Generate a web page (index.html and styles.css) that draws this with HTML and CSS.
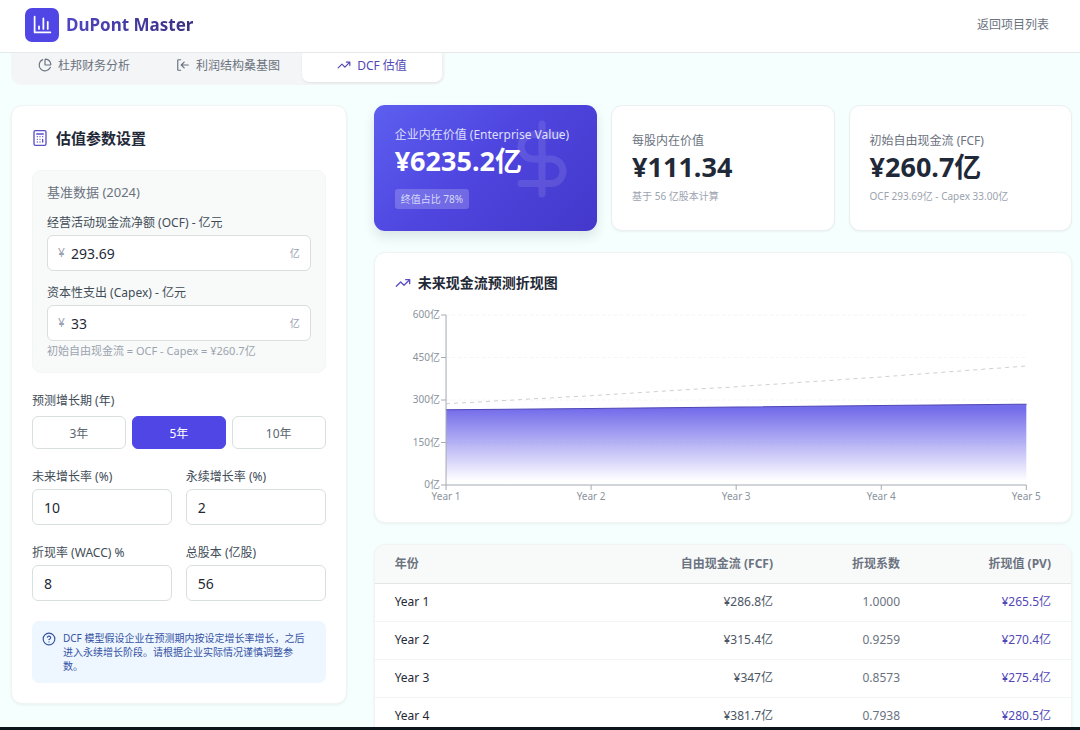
FILE: index.html
```
<!doctype html>
<html lang="zh-CN">
<head>
	<meta charset="utf-8">
	<meta name="viewport" content="width=device-width,initial-scale=1.0">
	<title>DuPont Master</title>
	<link rel="stylesheet" href="styles.css">
</head>

<body>
<div class="page">
	<header class="header">
		<div class="brand">
			<span class="logo">
				<svg viewBox="0 0 24 24" width="21" height="21"><path d="M3 3v18h18M18 17V9M13 17V5M8 17v-3"/></svg>
			</span>
			<span class="brand-name">DuPont Master</span>
		</div>
		<a class="back" href="#">返回项目列表</a>
	</header>

	<main class="main">
		<nav class="tabs">
			<button class="tab" type="button">
				<svg class="icon" viewBox="0 0 24 24"><path d="M21 12c.55 0 1-.45.95-1a10 10 0 0 0-8.95-8.95c-.55-.05-1 .4-1 .95v8a1 1 0 0 0 1 1z"/><path d="M21.2 15.9A10 10 0 1 1 8 2.8"/></svg>
				杜邦财务分析
			</button>
			<button class="tab" type="button">
				<svg class="icon" viewBox="0 0 24 24"><path d="M8 3H4a1 1 0 0 0-1 1v16a1 1 0 0 0 1 1h4M21 12H9M14 7l-5 5 5 5"/></svg>
				利润结构桑基图
			</button>
			<button class="tab active" type="button">
				<svg class="icon" viewBox="0 0 24 24"><path d="M22 7l-8.5 8.5-5-5L2 17M16 7h6v6"/></svg>
				DCF 估值
			</button>
		</nav>

		<div class="columns">
			<form class="card params">
				<h2 class="params-title">
					<svg class="icon" viewBox="0 0 24 24"><rect x="3" y="1" width="18" height="22" rx="2"/><path d="M7 6h10M16 14v4M16 10h.01M12 10h.01M8 10h.01M12 14h.01M8 14h.01M12 18h.01M8 18h.01"/></svg>
					估值参数设置
				</h2>

				<section class="base">
					<h3>基准数据 (2024)</h3>
					<label for="ocf">经营活动现金流净额 (OCF) - 亿元</label>
					<div class="money">
						<span>¥</span>
						<input id="ocf" type="text" value="293.69">
						<span>亿</span>
					</div>
					<label for="capex">资本性支出 (Capex) - 亿元</label>
					<div class="money">
						<span>¥</span>
						<input id="capex" type="text" value="33">
						<span>亿</span>
					</div>
					<p class="hint">初始自由现金流 = OCF - Capex = ¥260.7亿</p>
				</section>

				<div class="label">预测增长期 (年)</div>
				<div class="years">
					<button type="button">3年</button>
					<button type="button" class="active">5年</button>
					<button type="button">10年</button>
				</div>

				<div class="fields">
					<div>
						<label for="growth">未来增长率 (%)</label>
						<input id="growth" class="field" type="text" value="10">
					</div>
					<div>
						<label for="terminal">永续增长率 (%)</label>
						<input id="terminal" class="field" type="text" value="2">
					</div>
					<div>
						<label for="wacc">折现率 (WACC) %</label>
						<input id="wacc" class="field" type="text" value="8">
					</div>
					<div>
						<label for="shares">总股本 (亿股)</label>
						<input id="shares" class="field" type="text" value="56">
					</div>
				</div>

				<div class="note">
					<svg class="icon" viewBox="0 0 24 24"><circle cx="12" cy="12" r="10"/><path d="M9.1 9a3 3 0 0 1 5.8 1c0 2-3 3-3 3M12 17h.01"/></svg>
					<p>DCF 模型假设企业在预测期内按设定增长率增长，之后进入永续增长阶段。请根据企业实际情况谨慎调整参数。</p>
				</div>
			</form>

			<div class="results">
				<div class="stats">
					<div class="stat primary">
						<svg class="dollar" viewBox="0 0 24 24"><path d="M12 2v20M17 5H9.5a3.5 3.5 0 0 0 0 7h5a3.5 3.5 0 0 1 0 7H6"/></svg>
						<div class="stat-label">企业内在价值 (Enterprise Value)</div>
						<div class="stat-value">¥6235.2亿</div>
						<div class="badge">终值占比 78%</div>
					</div>
					<div class="stat">
						<div class="stat-label">每股内在价值</div>
						<div class="stat-value">¥111.34</div>
						<div class="stat-sub">基于 56 亿股本计算</div>
					</div>
					<div class="stat">
						<div class="stat-label">初始自由现金流 (FCF)</div>
						<div class="stat-value">¥260.7亿</div>
						<div class="stat-sub">OCF 293.69亿 - Capex 33.00亿</div>
					</div>
				</div>

				<section class="card chart-card">
					<h2 class="chart-title">
						<svg class="icon" viewBox="0 0 24 24"><path d="M22 7l-8.5 8.5-5-5L2 17M16 7h6v6"/></svg>
						未来现金流预测折现图
					</h2>
					<svg class="chart" viewBox="0 0 656 196">
						<defs>
							<linearGradient id="pv" x1="0" y1="0" x2="0" y2="1">
								<stop offset="5%" stop-color="#4f46e5" stop-opacity=".8"/>
								<stop offset="95%" stop-color="#4f46e5" stop-opacity="0"/>
							</linearGradient>
						</defs>
						<path class="grid" d="M51 9H631M51 51.5H631M51 94H631M51 136.5H631"/>
						<path class="area" d="M51 103.8L196 102.4L341 101L486 99.5L631 98.1V179H51Z"/>
						<path class="pv-line" d="M51 103.8L196 102.4L341 101L486 99.5L631 98.1"/>
						<path class="fcf-line" d="M51 97.7L196 89.6L341 80.7L486 70.9L631 60"/>
						<path class="axis" d="M51 9V179H631M46 9h5M46 51.5h5M46 94h5M46 136.5h5M46 179h5M51 179v5M196 179v5M341 179v5M486 179v5M631 179v5"/>
						<g class="y-labels">
							<text x="45" y="12">600亿</text>
							<text x="45" y="55">450亿</text>
							<text x="45" y="97">300亿</text>
							<text x="45" y="140">150亿</text>
							<text x="45" y="182">0亿</text>
						</g>
						<g class="x-labels">
							<text x="51" y="194">Year 1</text>
							<text x="196" y="194">Year 2</text>
							<text x="341" y="194">Year 3</text>
							<text x="486" y="194">Year 4</text>
							<text x="631" y="194">Year 5</text>
						</g>
					</svg>
				</section>

				<div class="card table-card">
					<table>
						<thead>
							<tr><th>年份</th><th class="fcf">自由现金流 (FCF)</th><th class="factor">折现系数</th><th class="pv">折现值 (PV)</th></tr>
						</thead>
						<tbody>
							<tr><td>Year 1</td><td>¥286.8亿</td><td>1.0000</td><td>¥265.5亿</td></tr>
							<tr><td>Year 2</td><td>¥315.4亿</td><td>0.9259</td><td>¥270.4亿</td></tr>
							<tr><td>Year 3</td><td>¥347亿</td><td>0.8573</td><td>¥275.4亿</td></tr>
							<tr><td>Year 4</td><td>¥381.7亿</td><td>0.7938</td><td>¥280.5亿</td></tr>
						</tbody>
					</table>
				</div>
			</div>
		</div>
	</main>
</div>
</body>
</html>
```
FILE: styles.css
```
* { box-sizing: border-box; }
body { margin: 0; background: #0c151b; color: #1f2937; font-family: "Noto Sans", "Noto Sans CJK SC", sans-serif; font-size: 12px; line-height: 16px; }
h2, h3, p { margin: 0; }
button, input { font-family: inherit; margin: 0; }
svg { display: block; fill: none; stroke: currentColor; stroke-width: 2; stroke-linecap: round; stroke-linejoin: round; }
.icon { width: 14px; height: 14px; flex: none; }

/* the page scrolls inside, above the dark strip */
.page { height: calc(100vh - 3px); overflow: auto; scrollbar-width: none; background: #f5fffe; }

.header { position: sticky; top: 0; z-index: 10; display: flex; align-items: center; justify-content: space-between; height: 53px; padding: 0 31px 3px 25px; background: #fff; border-bottom: 1px solid #e5e9ea; }
.brand { display: flex; align-items: center; gap: 7px; }
.logo { display: flex; align-items: center; justify-content: center; width: 34px; height: 34px; border-radius: 7px; background: #4f46e5; color: #fff; }
.brand-name { font-size: 17px; line-height: 24px; font-weight: 700; color: transparent; background: linear-gradient(90deg, #5046c4, #3a3080); -webkit-background-clip: text; background-clip: text; }
.back { color: #6b7280; text-decoration: none; }

.main { padding: 0 8px 24px 11px; margin-top: -8px; }
.tabs { display: flex; gap: 4px; width: fit-content; padding: 3px; border-radius: 10px; background: #f3f5f6; }
.tab { display: flex; align-items: center; justify-content: center; gap: 6px; width: 140px; height: 34px; padding: 0; border: 0; border-radius: 7px; background: none; color: #6b7280; font-size: 12px; }
.tab.active { background: #fff; color: #5148b5; box-shadow: 0 1px 2px rgba(0,0,0,.08); }

.columns { display: grid; grid-template-columns: repeat(3, minmax(0, 1fr)); gap: 27px; align-items: start; margin-top: 20px; }
.card { background: #fff; border: 1px solid #f0f4f4; border-radius: 11px; box-shadow: 0 1px 3px rgba(0,0,0,.06); }

.params { padding: 20px; }
.params-title { display: flex; align-items: center; gap: 8px; font-size: 15px; line-height: 24px; font-weight: 700; }
.params-title .icon { width: 16px; height: 16px; color: #5a50c8; }
.base { margin-top: 20px; padding: 14px; border: 1px solid #f3f6f6; border-radius: 9px; background: #f8faf9; }
.base h3 { margin-bottom: 16px; font-size: 13px; line-height: 14px; font-weight: 400; color: #6b7280; }
label, .label { display: block; color: #414c57; }
.money { display: flex; align-items: center; gap: 6px; height: 36px; margin-top: 4px; padding: 0 10px; border: 1px solid #d9dedf; border-radius: 6px; background: #fff; }
.money + label { margin-top: 14px; }
.money span { color: #9ca3af; }
.money span:last-child { font-size: 10px; }
.money input { flex: 1; min-width: 0; padding: 0; border: 0; outline: 0; background: none; color: #1f2937; font-size: 14px; }
.hint { margin-top: 3px; color: #9ca3af; font-size: 11px; line-height: 14px; }

.label { margin-top: 20px; }
.years { display: grid; grid-template-columns: repeat(3, 1fr); gap: 6px; margin-top: 7px; }
.years button { height: 33px; padding: 0; border: 1px solid #d9dedf; border-radius: 6px; background: #fff; color: #5b6570; font-size: 12px; }
.years button.active { border-color: #4f46e5; background: #4f46e5; color: #fff; }

.fields { display: grid; grid-template-columns: 1fr 1fr; gap: 20px 14px; margin-top: 20px; }
.field { display: block; width: 100%; height: 36px; margin-top: 4px; padding: 0 11px; border: 1px solid #d9dedf; border-radius: 6px; background: #fff; color: #1f2937; font-size: 14px; }

.note { display: flex; gap: 7px; margin-top: 20px; padding: 10px 16px 10px 10px; border-radius: 7px; background: #eef6ff; color: #3553a4; font-size: 10px; line-height: 14px; }
.note .icon { margin-top: 1px; }

.results { grid-column: span 2; }
.stats { display: grid; grid-template-columns: repeat(3, minmax(0, 1fr)); gap: 14px; }
.stat { position: relative; display: flex; flex-direction: column; justify-content: center; align-items: flex-start; height: 126px; padding: 0 20px; border: 1px solid #ebefef; border-radius: 11px; background: #fff; box-shadow: 0 1px 2px rgba(0,0,0,.05); }
.stat-label { color: #6b7280; white-space: nowrap; }
.stat-value { font-size: 27px; line-height: 36px; font-weight: 700; }
.stat-sub { margin-top: 4px; color: #9ca3af; font-size: 10px; line-height: 14px; }
.primary { border: 0; padding: 0 21px; background: linear-gradient(135deg, #5d5ff0, #4f46e0 45%, #4338ca); color: #fff; box-shadow: 0 6px 12px rgba(30,40,60,.12); }
.primary .stat-label { color: #dcdffb; }
.badge { margin-top: 10px; padding: 3px 6px; border-radius: 3px; background: rgba(255,255,255,.2); color: #d5d8fa; font-size: 10px; line-height: 14px; }
.dollar { position: absolute; top: 12px; right: 13px; width: 84px; height: 84px; opacity: .1; }

.chart-card { margin-top: 21px; padding: 20px; }
.chart-title { display: flex; align-items: center; gap: 7px; font-size: 14px; line-height: 20px; font-weight: 700; }
.chart-title .icon { width: 16px; height: 16px; color: #5a50c8; }
.chart { width: 100%; height: auto; margin-top: 13px; }
.chart text { fill: #8b939c; stroke: none; font-size: 10px; }
.grid { stroke: #f5f6f7; stroke-width: 1; stroke-dasharray: 3 3; }
.area { fill: url(#pv); stroke: none; }
.pv-line { stroke: #4f46b5; stroke-width: 1; }
.fcf-line { stroke: #cdd0d3; stroke-width: 1; stroke-dasharray: 4 4; stroke-linecap: butt; }
.axis { stroke: #a3abb3; stroke-width: 1; stroke-linecap: butt; }
.y-labels { text-anchor: end; }
.x-labels { text-anchor: middle; }

.table-card { margin-top: 21px; overflow: hidden; }
table { width: 100%; border-collapse: collapse; }
th, td { height: 38px; padding: 0 20px; text-align: right; border-bottom: 1px solid #f1f4f4; }
th { color: #6b7280; font-weight: 700; background: #f8faf9; border-color: #e2e6e7; }
th:first-child, td:first-child { text-align: left; }
.fcf { width: 150px; }
.factor { width: 127px; }
.pv { width: 151px; }
td { color: #4b5563; }
td:first-child { color: #1f2937; }
td:nth-child(3) { color: #6b7280; }
td:last-child { color: #5148b5; }
```
